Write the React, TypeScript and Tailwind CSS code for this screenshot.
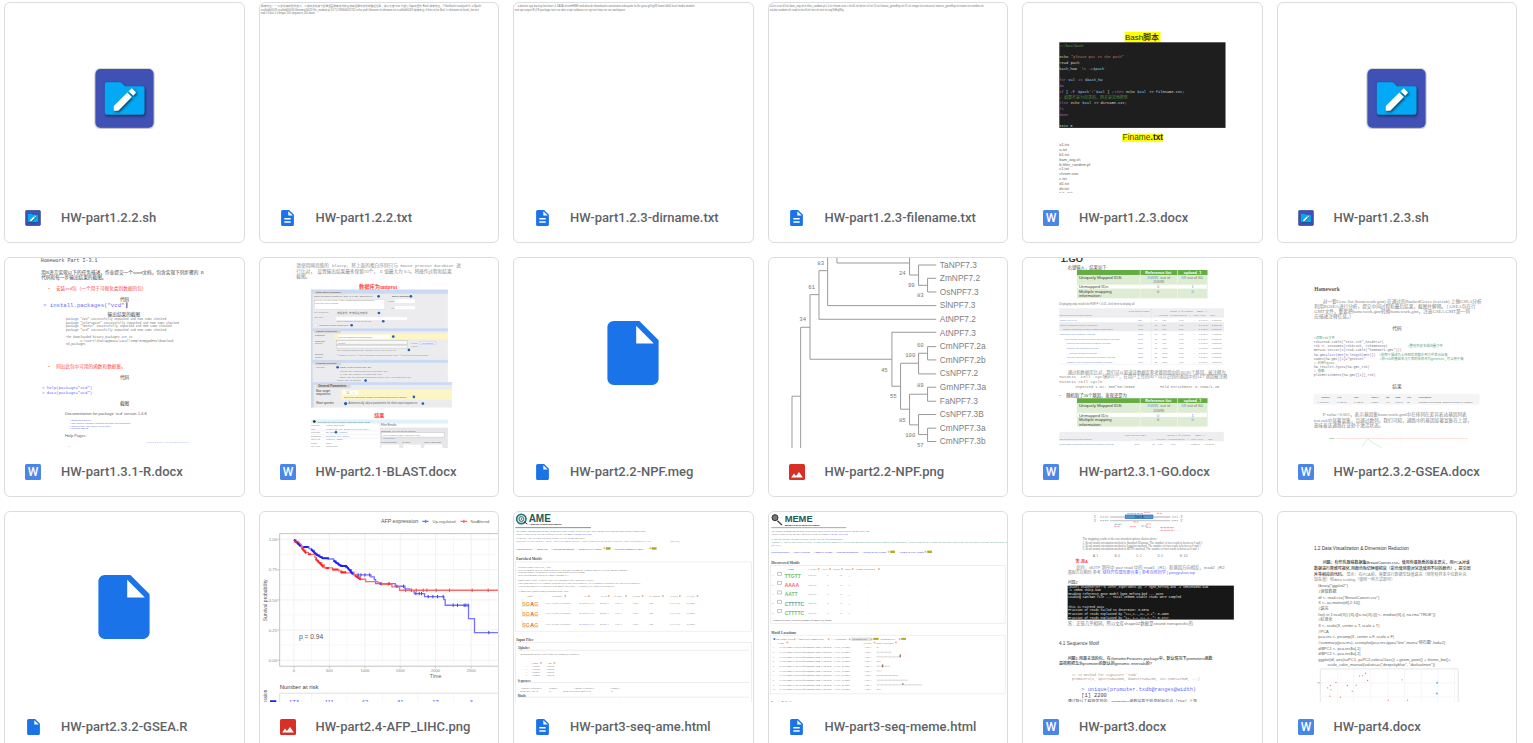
import type { ReactNode } from "react";

type Line = [x: number, y: number, size: number, text: string, fill?: string, font?: string, weight?: number];

const SANS = '"Liberation Sans", "Noto Sans CJK SC", sans-serif';
const SERIF = '"Liberation Serif", "Noto Sans CJK SC", serif';
const MONO = '"Liberation Mono", "Noto Sans CJK SC", monospace';
const GRAY = "#777777";
const BLUE = "#6b6bf5";
const LINK = "#6f8fd2";
const RED = "#ff4545";

function Lines({ rows, font = SANS, fill = GRAY }: { rows: Line[]; font?: string; fill?: string }) {
  return (
    <>
      {rows.map(([x, y, size, text, color, family, weight], i) => (
        <text key={i} x={x} y={y} fontSize={size} fill={color ?? fill} fontFamily={family ?? font} fontWeight={weight ?? 400} xmlSpace="preserve">
          {text}
        </text>
      ))}
    </>
  );
}

function Sheet({ top = 24, children }: { top?: number; children?: ReactNode }) {
  return (
    <svg viewBox={`15 ${top} 716 571`} className="block w-full" aria-hidden="true">
      {children}
    </svg>
  );
}

function Rects({ items }: { items: [number, number, number, number, string, string?][] }) {
  return (
    <>
      {items.map(([x, y, w, h, fill, stroke], i) => (
        <rect key={i} x={x} y={y} width={w} height={h} fill={fill} stroke={stroke} strokeWidth={2} />
      ))}
    </>
  );
}

/* ---------- icons ---------- */

function ScriptIcon({ className }: { className: string }) {
  return (
    <svg viewBox="0 0 181 184" className={className} aria-hidden="true">
      <rect x="3" y="3" width="175" height="177" rx="15" fill="#3f51b5" className="drop-shadow-[0px_1px_3px_rgba(0,0,0,0.6)]" />
      <path
        d="M31 49q0-6 6-6h38q5 0 8 3l9 9h52q7 0 7 7v72q0 7-7 7H37q-6 0-6-6z"
        fill="#03a9f4"
        className="drop-shadow-[2px_4px_4px_rgba(0,0,0,0.6)]"
      />
      <g transform="translate(47 51) scale(3.7)" className="drop-shadow-[1px_1px_1px_rgba(0,0,0,0.6)]">
        <path
          fill="#fff"
          d="M3 17.25V21h3.75L17.81 9.94l-3.75-3.75L3 17.25zM20.71 7.04c.39-.39.39-1.02 0-1.41l-2.34-2.34c-.39-.39-1.02-.39-1.41 0l-1.83 1.83 3.75 3.75 1.83-1.83z"
        />
      </g>
    </svg>
  );
}

function FileIcon({ className }: { className: string }) {
  return (
    <svg viewBox="4 2 16 20" className={className} aria-hidden="true">
      <path fill="#1a73e8" d="M14 2H6c-1.1 0-2 .9-2 2v16c0 1.1.9 2 2 2h12c1.1 0 2-.9 2-2V8l-6-6zm-1 7V3.5L18.5 9H13z" />
    </svg>
  );
}

function TextIcon() {
  return (
    <svg viewBox="4 2 16 20" className="h-4 w-[13px]" aria-hidden="true">
      <path
        fill="#1a73e8"
        d="M14 2H6c-1.1 0-2 .9-2 2v16c0 1.1.9 2 2 2h12c1.1 0 2-.9 2-2V8l-6-6zm2 16H8v-2h8v2zm0-4H8v-2h8v2zm-3-5V3.5L18.5 9H13z"
      />
    </svg>
  );
}

function WordIcon() {
  return (
    <svg viewBox="0 0 16 16" className="size-4" aria-hidden="true">
      <rect width="16" height="16" rx="1.5" fill="#4a86e8" />
      <text x="8" y="12.2" fontSize="12" textAnchor="middle" fill="#fff" fontFamily="Roboto, sans-serif" fontWeight="500">
        W
      </text>
    </svg>
  );
}

function ImageIcon() {
  return (
    <svg viewBox="0 0 16 16" className="size-4" aria-hidden="true">
      <rect width="16" height="16" rx="1.5" fill="#d93025" />
      <path d="M2.2 13.4 5 9.5l2 2.4 3-3.9 3.8 5.4z" fill="#fff" />
    </svg>
  );
}

/* ---------- previews ---------- */

function TxtSheet({ rows }: { rows: Line[] }) {
  return (
    <Sheet top={9}>
      <Lines rows={rows} fill="#777777" />
    </Sheet>
  );
}

function BashSheet() {
  const code: Line[] = [
    [124, 141, 11, "#!/bin/bash", "#5f9a4b"],
    [124, 175, 11, "echo", "#dcdcaa"],
    [159, 175, 11, '"please put in the path"', "#c8795c"],
    [124, 192, 11, "read", "#dcdcaa"],
    [158, 192, 11, "path", "#dddddd"],
    [124, 210, 11, "bash_hw=", "#cccccc"],
    [184, 210, 11, "`ls -a", "#c8795c"],
    [226, 210, 11, "$path`", "#8fd0f5"],
    [124, 244, 11, "for", "#b267ae"],
    [151, 244, 11, "val", "#8fd0f5"],
    [180, 244, 11, "in", "#b267ae"],
    [201, 244, 11, "$bash_hw", "#8fd0f5"],
    [124, 262, 11, "do", "#b267ae"],
    [124, 279, 11, "if", "#b267ae"],
    [144, 279, 11, "[ -f", "#dddddd"],
    [180, 279, 11, "$path", "#8fd0f5"],
    [214, 279, 11, "'/'", "#c8795c"],
    [234, 279, 11, "$val", "#8fd0f5"],
    [268, 279, 11, "] ;", "#dddddd"],
    [290, 279, 11, "then", "#b267ae"],
    [324, 279, 11, "echo", "#dcdcaa"],
    [358, 279, 11, "$val", "#8fd0f5"],
    [394, 279, 11, ">> filename.txt;", "#dddddd"],
    [124, 297, 12, "# 如果不是为目录的，则会是其他类型", "#4f8a3d"],
    [124, 313, 11, "else", "#b267ae"],
    [158, 313, 11, "echo", "#dcdcaa"],
    [193, 313, 11, "$val", "#8fd0f5"],
    [228, 313, 11, ">> dirname.txt;", "#dddddd"],
    [124, 330, 11, "fi", "#b267ae"],
    [124, 347, 11, "done", "#b267ae"],
    [124, 381, 11, "exit 0", "#dcdcaa"],
  ];
  const names = ["a1.txt", "a.txt", "b1.txt", "bam_wig.sh", "b.filter_random.pl", "c1.txt", "chrom.size", "c.txt", "d1.txt", "dir.txt", "Fi5_36bgs"];
  return (
    <Sheet top={9}>
      <Rects items={[[320, 96, 108, 31, "#ffff00"], [313, 401, 122, 25, "#ffff00"], [124, 127, 499, 257, "#1e1e1e"]]} />
      <Lines rows={[[321, 121, 24, "Bash脚本", "#222200", undefined, 500], [314, 421, 25, "Finame", "#444400"], [398, 421, 25, ".txt", "#222200", undefined, 600]]} />
      <Lines rows={code} font={MONO} />
      <Lines rows={names.map((n, i): Line => [124, 439 + i * 14.5, 12, n, "#666"])} />
    </Sheet>
  );
}

function RSheet() {
  return (
    <Sheet>
      <Lines
        font={SERIF}
        rows={[
          [122, 37, 15, "Homework Part I-3.1", "#555555", MONO],
          [124, 71, 14, "用R语言实现以下的任务描述，作业提交一个word文档，包含实现下列步骤的", "#444444"],
          [603, 71, 14, "R", "#444444"],
          [124, 88, 14, "代码和每一步输出结果的截图。", "#444444"],
          [145, 121, 14, "•", RED],
          [168, 121, 14, "安装vcd包（一个用于可视化类别数据的包）", RED],
          [360, 154, 14, "代码", "#444444"],
          [129, 171, 17, '> install.packages("vcd")', BLUE, MONO],
          [323, 199, 14, "输出结果的截图", "#444444"],
          [198, 210, 9, 'package "zoo" successfully unpacked and MD5 sums checked', GRAY, MONO],
          [198, 221, 9, 'package "colorspace" successfully unpacked and MD5 sums checked', GRAY, MONO],
          [198, 232, 9, 'package "lmtest" successfully unpacked and MD5 sums checked', GRAY, MONO],
          [198, 243, 9, 'package "vcd" successfully unpacked and MD5 sums checked', GRAY, MONO],
          [198, 265, 9, "The downloaded binary packages are in", GRAY, MONO],
          [241, 275, 9, "C:\\Users\\zhan\\AppData\\Local\\Temp\\RtmpQ9dF8V\\download", GRAY, MONO],
          [198, 286, 9, "ed_packages", GRAY, MONO],
          [145, 354, 14, "•", RED],
          [168, 354, 14, "列出此包中可用的函数和数据集。", RED],
          [360, 387, 14, "代码", "#444444"],
          [126, 416, 12, '> help(package="vcd")', BLUE, MONO],
          [126, 431, 12, '> data(package="vcd")', BLUE, MONO],
          [360, 466, 14, "截图", "#444444"],
          [195, 495, 12, "Documentation for package ‘vcd’ version 1.4-8", "#666666", SANS],
          [210, 514, 7, "• DESCRIPTION file.", BLUE, SANS],
          [210, 522, 7, "• User guides, package vignettes and other documentation.", BLUE, SANS],
          [210, 530, 7, "• Code demos. Use demo() to run them.", BLUE, SANS],
          [210, 538, 7, "• Package NEWS.", BLUE, SANS],
          [195, 560, 12, "Help Pages", "#666666", SANS],
          [438, 578, 7, "A B C D E F G H I K L M N O P R S T U V", "#9999ff", SANS],
          [206, 592, 10, "–"],
        ]}
      />
      <path d="M381 155V175" stroke="#222" strokeWidth="2" />
    </Sheet>
  );
}

function BlastSheet() {
  return (
    <Sheet>
      <Lines
        font={SERIF}
        fill="#8c8c8c"
        rows={[
          [124, 52, 14, "请使用网页版的"],
          [231, 52, 12, "blastp,", "#8c8c8c", MONO],
          [289, 52, 14, "将上面的蛋白序列只与"],
          [437, 52, 12, "mouse protein database", "#8c8c8c", MONO],
          [604, 52, 14, "进"],
          [124, 69, 14, "行比对，  设置输出结果最多保留10个，  E 值最大为 0.5。将操作过程和结果"],
          [124, 85, 14, "截图。"],
          [312, 118, 16, "数据库为uniprot", RED, SERIF, 700],
          [358, 502, 15, "结果", RED, SERIF, 700],
        ]}
      />
      <Rects
        items={[
          [168, 119, 411, 278, "#ececef"], [168, 119, 411, 12, "#cbdaf3"], [168, 119, 5, 278, "#cbdaf3"],
          [178, 123, 95, 10, "#d8d8dc"], [178, 148, 212, 30, "#fff", "#dddddd"], [421, 148, 59, 11, "#fff"], [421, 168, 59, 10, "#fff"],
          [244, 201, 212, 9, "#fff"], [168, 235, 411, 9, "#cbdaf3"], [178, 240, 80, 10, "#d8d8dc"], [238, 252, 341, 16, "#fdf6c4"], [250, 254, 155, 12, "#fff"],
          [244, 272, 213, 11, "#f8f8f8", "#c8c8c8"], [244, 286, 213, 9, "#f8f8f8", "#d0d0d0"], [493, 274, 50, 10, "#eef", "#c9d7f4"],
          [168, 330, 411, 9, "#cbdaf3"], [178, 336, 82, 10, "#d8d8dc"], [168, 397, 423, 76, "#ececef"], [168, 397, 423, 8, "#cbdaf3"],
          [168, 397, 8, 76, "#cbdaf3"], [184, 402, 103, 12, "#d8d8dc"], [258, 419, 333, 30, "#fdf6c4"], [264, 422, 46, 12, "#fff"],
          [168, 509, 411, 12, "#ddf3f9"], [376, 533, 203, 62, "#e7e7ea"], [379, 548, 189, 14, "#fff", "#ccc"], [379, 584, 54, 12, "#fff"], [445, 584, 53, 12, "#fff"], [508, 584, 54, 12, "#fff"],
          [178, 222, 8, 8, "#fff", "#ddd"],
        ]}
      />
      <Lines
        fill="#8a8a8a"
        rows={[
          [183, 130, 7, "Enter Query Sequence", "#666", SANS, 700],
          [178, 142, 7, "Enter accession number(s), gi(s), or FASTA sequence(s)", "#666"],
          [411, 142, 7, "Query subrange", "#666", SANS, 700], [401, 157, 7, "From"], [409, 176, 7, "To"],
          [179, 154, 6, "MKVLWAALLVTFLAGCQAKVEQAVETEPEPELRQQTEWQSGQRW"], [179, 161, 6, "LGRFWDYLRWVQTLSEQ"],
          [178, 190, 7, "Or, upload file"], [246, 191, 8, "选择文件  未选择任何文件", "#666"], [178, 205, 7, "Job Title"],
          [246, 217, 6, "Enter a descriptive title for your BLAST"], [190, 229, 7, "Align two or more sequences", "#666"],
          [183, 247, 7, "Choose Search Set", "#666", SANS, 700], [180, 258, 7, "Database", "#666"], [250, 263, 7, "UniProtKB/Swiss-Prot(swissprot)"],
          [180, 275, 7, "Organism", "#666"], [180, 283, 6, "Optional", "#3b8fb8"], [250, 281, 7, "mouse"], [468, 281, 6, "exclude"], [498, 281, 6, "Add organism", LINK], [468, 291, 6, "exclude"],
          [246, 303, 6, "Enter organism common name, binomial, or tax id. Only 20 top taxa"],
          [180, 316, 7, "Exclude", "#666"], [180, 324, 6, "Optional", "#3b8fb8"], [246, 317, 7, "□ Models (XM/XP)  □ Non-redundant RefSeq proteins (WP)  □ Uncultured/environmental"],
          [183, 343, 7, "Program Selection", "#666", SANS, 700], [180, 354, 7, "Algorithm"],
          [255, 355, 7, "blastp (protein-protein BLAST)", "#666"], [255, 365, 7, "PSI-BLAST (Position-Specific Iterated BLAST)"], [255, 374, 7, "PHI-BLAST (Pattern Hit Initiated BLAST)"], [255, 384, 7, "DELTA-BLAST (Domain Enhanced Lookup Time Accelerated BLAST)"], [246, 394, 6, "Choose a BLAST algorithm"],
          [190, 411, 9, "General Parameters", "#555", SANS, 700], [183, 426, 9, "Max target", "#444"], [183, 436, 9, "sequences", "#444"], [274, 431, 8, "10    ∨"],
          [267, 444, 7, "Select the maximum number of aligned sequences to display", "#666"], [183, 463, 9, "Short queries", "#444"], [281, 463, 8, "Automatically adjust parameters for short input sequences", "#666"],
          [186, 518, 6, "Your results are filtered to match records that include: mouse", "#4b7680"],
          [168, 528, 7, "Job Title"], [213, 528, 7, "Protein Sequence"], [168, 539, 7, "RID"], [213, 539, 7, "K9G8XWZA016  Search expires on 12-04", LINK],
          [168, 550, 7, "Program"], [213, 550, 7, "BLASTP       Citation", LINK], [168, 561, 7, "Database"], [213, 561, 7, "swissprot   See details", LINK],
          [168, 571, 7, "Query ID"], [213, 571, 7, "lcl|Query_33231"], [168, 582, 7, "Descr."], [213, 582, 7, "None"], [168, 592, 7, "Mol. type"], [213, 592, 7, "amino acid"],
          [378, 528, 8, "Filter Results", "#555"], [378, 545, 7, "Organism  only top 20 will appear", "#666"], [384, 558, 7, "Type common name, binomial, taxid"], [378, 568, 6, "+ Add organism", LINK], [378, 580, 7, "Percent Identity", "#666"], [443, 580, 7, "E value", "#666"], [508, 580, 7, "Query Coverage", "#666"],
        ]}
      />
      {[[371, 139], [468, 139], [372, 189], [385, 214], [290, 226], [415, 260], [462, 300], [248, 352], [332, 392], [477, 441], [272, 461], [504, 461], [243, 547], [178, 515]].map(([cx, cy], i) => (
        <circle key={i} cx={cx} cy={cy} r={i === 10 ? 5 : 4} fill={i === 13 ? "#222" : "#1f63b5"} />
      ))}
      <path d="M168 131H579M168 173V235M376 522V595M168 543H372M168 554H372M168 565H372" stroke="#dcdfe6" fill="none" />
    </Sheet>
  );
}

function TreeSheet() {
  const leaves = ["TaNPF7.3", "ZmNPF7.2", "OsNPF7.3", "SlNPF7.3", "AtNPF7.2", "AtNPF7.3", "CmNPF7.2a", "CmNPF7.2b", "CsNPF7.2", "GmNPF7.3a", "FaNPF7.3", "CsNPF7.3B", "CmNPF7.3a", "CmNPF7.3b"];
  return (
    <Sheet>
      <path
        d="M219 24V39H437M437 24V75H464M517 45H464V106H491M517 85H491V126H517M191 24V167H517M191 62H165V208H517M165 134H138V328H384M138 232H110V595M110 439H84V595M517 247H384V409H410M464 340H410V478H437M491 310H464V372H517M517 290H491V330H517M491 433H437V525H464M517 412H491V454H517M517 494H464V554H491M517 535H491V575H517"
        fill="none"
        stroke="#9a9a9a"
        strokeWidth="3"
      />
      <Lines rows={leaves.map((n, i): Line => [528, 53 + i * 40.8, 25, n, "#808080"])} />
      <Lines
        fill="#777"
        font={MONO}
        rows={[[160, 44, 17, "83"], [133, 116, 17, "61"], [106, 212, 17, "34"], [405, 75, 17, "24"], [432, 111, 17, "99"], [459, 142, 17, "83"], [459, 291, 17, "60"], [424, 321, 17, "100"], [351, 365, 17, "45"], [459, 412, 17, "89"], [378, 445, 17, "55"], [405, 516, 17, "85"], [424, 560, 17, "100"], [459, 590, 17, "57"]]}
      />
    </Sheet>
  );
}

function GreenTable({ y }: { y: number }) {
  return (
    <>
      <Rects items={[[177, y, 392, 15, "#64ad43"], [177, y + 15, 392, 28, "#ddecd2"], [177, y + 43, 392, 14, "#ffffff", "#ddecd2"], [177, y + 57, 392, 28, "#ddecd2"]]} />
      <path d={`M367 ${y}v85M479 ${y}v85`} stroke="#f4faf0" strokeWidth="2" />
      <Lines
        rows={[
          [382, y + 12, 12, "Reference list", "#fff", SANS, 700],
          [498, y + 12, 12, "upload_1", "#fff", SANS, 700],
          [183, y + 27, 13, "Uniquely Mapped IDS:", "#444"],
          [388, y + 27, 12, "20595", LINK],
          [427, y + 27, 12, "out of"],
          [406, y + 40, 12, "20595"],
          [491, y + 27, 12, "59", LINK],
          [508, y + 27, 12, "out of 60"],
          [183, y + 55, 13, "Unmapped IDs:", "#444"],
          [417, y + 55, 12, "0", LINK],
          [521, y + 55, 12, "1", LINK],
          [183, y + 69, 13, "Multiple mapping", "#444"],
          [183, y + 82, 13, "information:", "#444"],
          [417, y + 69, 12, "0"],
          [521, y + 69, 12, "0", LINK],
        ]}
      />
    </>
  );
}

function GoSheet() {
  const terms: [number, string][] = [[125, "muscle cell cycle"], [125, "protein-containing complex assembly"], [134, "*protein-containing complex subunit organization"], [125, "macromolecule metabolic process"], [139, "*nucleobase-containing compound metabolic process"], [145, "*nucleic acid compound metabolic process"], [145, "*heterocycle metabolic process"], [153, "*cellular metabolic process"], [145, "*cellular aromatic compound metabolic process"], [145, "*organic cyclic compound metabolic process"]];
  const nums = ["831", "1486", "1461", "2187", "2419", "2460", "2540", "7040", "2598", "2740"];
  return (
    <Sheet>
      <Lines rows={[[128, 37, 28, "1.GO", "#333", SANS, 700], [149, 56, 13, "右键输入，结果如下", "#555"]]} />
      <GreenTable y={60} />
      <Lines rows={[[124, 165, 8, "Displaying only results for FDR P < 0.05, click here to display all"]]} />
      <Rects items={[[124, 175, 494, 27, "#eeeef0"], [124, 217, 494, 27, "#ebebed"]]} />
      <Lines
        fill="#8a8a8a"
        rows={[
          [330, 185, 7, "Homo sapiens (REF)", LINK],
          [456, 185, 7, "upload_1 (▼Hierarchy"],
          [538, 185, 7, "NEW! ⓘ)", RED],
          [124, 199, 7, "GO biological process complete", LINK],
          [368, 199, 7, "#"],
          [410, 199, 7, "#    expected   Fold Enrichment   +/-   raw P value       FDR", LINK],
          ...terms.map(([x, t], i): Line => [x, 213 + i * 14, 7, t, LINK]),
          ...nums.map((n, i): Line => [360, 213 + i * 14, 7, n, LINK]),
          ...nums.map((_, i): Line => [410, 213 + i * 14, 7, `${14 + i}`, LINK]),
          ...nums.map((_, i): Line => [432, 213 + i * 14, 7, `${i + 4}.29`]),
          ...nums.map((_, i): Line => [483, 213 + i * 14, 7, `${i % 4}.78`]),
          ...nums.map((_, i): Line => [527, 213 + i * 14, 7, "+"]),
          ...nums.map((_, i): Line => [543, 213 + i * 14, 7, `${(i % 9) + 1}.74E-04`]),
          ...nums.map((_, i): Line => [582, 213 + i * 14, 7, `${(i % 9) + 1}.86E-02`]),
        ]}
      />
      <path d="M124 202H618M124 343H618M400 175V343" stroke="#dedee2" />
      <Lines
        font={SERIF}
        fill="#888"
        rows={[
          [149, 371, 13, "通过和数据库比对，我们可以知道该数据库参考基因组中的20595个基因，被注释为"],
          [124, 385, 12, "Mitotic  cell  cycle", "#888", MONO],
          [258, 385, 13, "的831个，在用户上传的60个可以识别的基因中的14个基因被注释"],
          [124, 399, 12, "Mitotic cell cycle", "#888", MONO],
          [173, 413, 11, "expected 1.02: 500*50/20595", "#888", MONO],
          [426, 413, 11, "Fold Enrichment 6.78=9/1.45", "#888", MONO],
          [123, 441, 13, "•"],
          [145, 442, 13, "随机取了30个基因，发现还是为", "#444"],
        ]}
      />
      <GreenTable y={445} />
      <Rects items={[[124, 546, 494, 28, "#eeeef0"]]} />
      <Lines
        fill="#8a8a8a"
        rows={[
          [320, 557, 7, "Homo sapiens (REF)", LINK],
          [448, 557, 7, "upload_1 (▼Hierarchy"],
          [533, 557, 7, "NEW! ⓘ)", RED],
          [124, 571, 7, "GO biological process complete", LINK],
          [356, 571, 7, "#"],
          [403, 571, 7, "#    expected   Fold Enrichment   +/-   raw P value       FDR", LINK],
          [124, 585, 7, "nucleobase-containing compound metabolic process", LINK],
          [350, 585, 7, "2419", LINK],
          [403, 585, 7, "15    4.02              3.01               +      1.21E-06       1.79E-02"],
        ]}
      />
    </Sheet>
  );
}

function GseaSheet() {
  return (
    <Sheet>
      <Lines
        font={SERIF}
        fill="#858585"
        rows={[
          [124, 124, 16, "Homework", "#555", SERIF, 700],
          [149, 159, 14, "对一套Gene list (homework.gmt) 在通过的RankedGenes (test.rnk) 上做GSEA分析"],
          [124, 174, 14, "利用RGSEA进行分析，提交中间过程和最后结果，截图并解释。（ GSEA包在行"],
          [124, 190, 14, "GMT文件，重要把homework.gmt转换homework.gmt，注意GSEA GMT第一列"],
          [124, 205, 14, "应描述注释信息。）"],
          [358, 239, 14, "代码", "#555"],
        ]}
      />
      <Lines
        font={MONO}
        fill="#777"
        rows={[
          [122, 267, 10, "#读取rnk文件", "#5da37c"],
          [122, 279, 10, 'rnk=read.table("test.rnk",header=T)'],
          [122, 292, 10, "rnk <- setNames(rnk$rank, rnk$GeneID)"],
          [404, 292, 10, "#整理并定名成向量文件", "#5da37c"],
          [122, 304, 10, 'GMT=as.vector(t(read.table("homework.gmt")))'],
          [122, 317, 10, "hw.gmt=list(GMT[3:length(GMT)])", "#7373b8"],
          [318, 317, 10, "#前两个描述为上传到后面算去到文件表示出来", "#5da37c"],
          [122, 329, 10, 'names(hw.gmt)[1]="geneset"'],
          [320, 329, 10, "#将rnk的基因名与文库的名称改为geneset,可以用于做", "#5da37c"],
          [122, 341, 10, "# 利用fgsea", "#5da37c"],
          [122, 354, 10, "hw_result<-fgsea(hw.gmt,rnk)"],
          [122, 366, 10, "# 画图", "#5da37c"],
          [122, 379, 10, "plotEnrichment(hw.gmt[[1]],rnk)"],
        ]}
      />
      <Lines
        rows={[
          [358, 414, 14, "结果", "#555"],
          [149, 499, 14, "P-value<0.001，表示基因集homework.gmt中在排列在差异表达基因列表", "#858585", SERIF],
          [122, 515, 14, "test.rnk中显著富集，且通过数列，我们可知，通路中的基因显著富集在上部，", "#858585", SERIF],
          [122, 532, 14, "意味着该通路在该处于激活状态。", "#858585", SERIF],
        ]}
      />
      <Rects items={[[122, 432, 498, 32, "#f4f5f7"]]} />
      <Lines
        rows={[
          [145, 445, 7, "pathway", "#444"], [193, 445, 7, "pval", "#444"], [243, 445, 7, "padj", "#444"], [294, 445, 7, "log2err", "#444"], [340, 445, 7, "ES", "#444"], [368, 445, 7, "NES", "#444"], [403, 445, 7, "size", "#444"], [437, 445, 7, "leadingEdge", "#444"],
          [134, 460, 7, "1  geneset"], [193, 460, 7, "1.45E-10"], [243, 460, 7, "1.45E-10"], [294, 460, 7, "0.8267"], [340, 460, 7, "0.6"], [368, 460, 7, "2.8745"], [403, 460, 7, "52"], [437, 460, 7, "c(ENSG00000117632, ENSG00000131747, ENSG0"],
        ]}
      />
      <path d="M168 566H185" stroke="#8bc0a0" strokeWidth="2" />
      <path d="M190 566H583" stroke="#ffb3b3" strokeDasharray="3 2" strokeWidth="2" />
      <path d="M267 591L284 567 302 580 326 593" fill="none" stroke="#baf2ba" strokeWidth="2" />
      <path d="M384 551V592" stroke="#eeeeee" />
    </Sheet>
  );
}

function SurvivalSheet() {
  const xs = [117, 223, 330, 436, 542, 649];
  return (
    <Sheet top={22}>
      <path d="M74 104H731M74 195H731M74 286H731M74 376H731M74 467H731M117 87V485M223 87V485M330 87V485M436 87V485M542 87V485M649 87V485" stroke="#eaeaea" strokeWidth="2" />
      <path d="M74 150H731M74 241H731M74 331H731M74 421H731M170 87V485M276 87V485M383 87V485M489 87V485M596 87V485M702 87V485M170 566V594M276 566V594M383 566V594M489 566V594M596 566V594" stroke="#f3f3f3" strokeWidth="2" />
      <path d="M731 87H74V485H731M67 104H74M67 195H74M67 286H74M67 376H74M67 467H74M117 485V491M223 485V491M330 485V491M436 485V491M542 485V491M649 485V491" fill="none" stroke="#c4c4c4" strokeWidth="3" />
      <path d="M74 594V566H731" fill="none" stroke="#d0d0d0" strokeWidth="2" />
      <path d="M117 105H122V110H129V118H136V124H141V127H162V132H170V137H178V146H186V151H194V156H202V161H220V163H236V169H243V175H251V181H260V185H272V189H280V195H289V203H296V211H348V217H358V225H362V237H421V245H450V253H465V258H478V267H509V276H567V285H571V302H641V342H659V384H731" fill="none" stroke="#7474ff" strokeWidth="4" />
      <path d="M117 105H121V113H133V119H139V128H146V137H152V143H160V149H180V158H184V168H190V174H200V181H208V190H233V195H252V199H260V205H297V211H308V217H316V224H332V231H369V235H376V239H411V247H434V257H731" fill="none" stroke="#ff6969" strokeWidth="4" />
      <path d="M117 105l20 20M145 127h16M168 134l18 17 18 10h18M236 168l22 16h16l12 15 8 10" fill="none" stroke="#2020f5" strokeWidth="6" />
      <path d="M118 108l7 6M140 130l14 16M160 149h8M182 162l24 26M212 190h10M232 195h18M256 203h18M300 213l18 12" fill="none" stroke="#f52a2a" strokeWidth="6" />
      <path d="M310 206v10M318 206v10M330 206v10M344 206v10M376 233v8M403 233v8M426 240v10M446 240v10M483 262v10M493 262v10M500 262v10M520 271v10M534 271v10M548 271v10M565 271v10M595 297v10M608 297v10M628 297v10M633 297v10M640 297v10M702 379v10" stroke="#3d3df5" strokeWidth="3" />
      <path d="M380 233v10M400 233v10M452 252v10M470 252v10M484 252v10M505 252v10M516 252v10M544 252v10M584 252v10M652 252v10M700 252v10" stroke="#f54545" strokeWidth="3" />
      <Lines
        rows={[
          [378, 56, 16, "AFP expression", "#555"], [533, 55, 12, "Up-regulated", "#666"], [647, 55, 12, "NotAltered", "#666"],
          [41, 109, 13, "1.00", "#888"], [41, 200, 13, "0.75", "#888"], [41, 291, 13, "0.50", "#888"], [41, 381, 13, "0.25", "#888"], [41, 472, 13, "0.00", "#888"],
          [525, 521, 16, "Time", "#666"], [132, 402, 20, "p = 0.94", "#555"], [74, 554, 18, "Number at risk", "#444"],
        ]}
      />
      {["0", "500", "1000", "1500", "2000", "2500"].map((t, i) => (
        <text key={t} x={xs[i]} y="502" fontSize="12" textAnchor="middle" fill="#888" fontFamily={SANS}>{t}</text>
      ))}
      {["173", "111", "42", "31", "17", "3"].map((t, i) => (
        <text key={t} x={xs[i]} y="597" fontSize="18" textAnchor="middle" fill="#5555ff" fontFamily={SANS}>{t}</text>
      ))}
      <text transform="translate(36 350) rotate(-90)" fontSize="15" fill="#555" fontFamily={SANS}>Survival probability</text>
      <text transform="translate(36 654) rotate(-90)" fontSize="14" fill="#555" fontFamily={SANS}>AFP expression</text>
      <path d="M502 50H521M512 45v10" stroke="#7474ff" strokeWidth="4" />
      <path d="M617 50H637M627 45v10" stroke="#ff6969" strokeWidth="4" />
      <path d="M45 590H64" stroke="#2020ff" strokeWidth="6" />
    </Sheet>
  );
}

function AmeSheet() {
  const rows = [295, 325, 358];
  return (
    <Sheet top={22}>
      <circle cx="37" cy="43" r="14" fill="none" stroke="#2b7375" strokeWidth="5" />
      <circle cx="37" cy="43" r="7" fill="none" stroke="#4d9495" strokeWidth="4" />
      <circle cx="37" cy="43" r="2" fill="#222" />
      <path d="M45 51L55 58" stroke="#333" strokeWidth="3" />
      <path d="M19 69H246" stroke="#6b9b9c" strokeWidth="3" />
      <Rects items={[[20, 172, 708, 208, "none", "#e8e8e8"], [20, 414, 708, 200, "none", "#e8e8e8"], [291, 128, 14, 7, "#a5a916"], [428, 128, 15, 7, "#a5a916"]]} />
      <path d="M25 437H722M25 534H722M25 578H722" stroke="#e3e3e3" strokeWidth="2" />
      <Lines
        font={SERIF}
        rows={[
          [59, 52, 30, "AME", "#1d5a5d", SANS, 700],
          [61, 61, 7, "Analysis of Motif Enrichment", "#222", SANS, 700],
          [20, 82, 8, "For further information on how to interpret these results please access"],
          [248, 82, 8, "http://meme-suite.org/doc/ame-output-format.html", BLUE],
          [20, 91, 8, "To get a copy of the MEME software please access"],
          [179, 91, 8, "http://meme-suite.org", BLUE],
          [20, 103, 8, "If you use AME in your research, please cite the following paper:"],
          [20, 112, 7, 'Robert McLeay and Timothy L. Bailey, "Motif Enrichment Analysis: A unified framework and method evaluation", BMC Bioinformatics, 11:165', "#6aa080"],
          [485, 112, 7, "[full text]", BLUE],
          [22, 136, 7, "Enriched Motifs", BLUE, SERIF, 700],
          [77, 136, 7, "|   Input Files", BLUE, SERIF, 700],
          [126, 136, 7, "|  Program information", BLUE, SERIF, 700],
          [204, 136, 7, "|  Results in TSV Format", BLUE, SERIF, 700],
          [313, 136, 7, "|  Partition sequences by motif", BLUE, SERIF, 700],
          [22, 167, 11, "Enriched Motifs", "#555", SERIF, 700],
          [26, 190, 8, "Sequence motif pair: seq_AME"],
          [26, 198, 8, "Selected motifs used in 1000 sequences at optimal cutting the Primary positive p-value against controls"],
          [26, 206, 8, "Sequence model frequencies: 0.274 0.226 0.226 0.274 at 0.000"],
          [26, 214, 8, "Total pseudocount added to a motif column: 0.1"],
          [26, 230, 8, "Significance Score: Fisher's exact test (optimized over median p-value)"],
          [26, 238, 8, "Labelling positives: all Primary sequences are labelled as positive, all Secondary sequences are labelled as negative"],
          [26, 246, 8, "Classifying positives: sequences with motif total score > 10 (total) are classified as positive"],
          [26, 262, 8, "At most total (Bonferroni) reporting cutoff 10.0"],
          [54, 277, 8, "Logo"], [130, 277, 8, "Database"], [226, 277, 8, "ID"], [273, 277, 8, "Alt ID"], [316, 277, 8, "p-value"], [369, 277, 8, "E-value"], [419, 277, 8, "TP Thresh"], [483, 277, 8, "TP (%)"], [534, 277, 8, "FP (%)"],
          ...rows.flatMap((y): Line[] => [
            [108, y + 2, 7, "JASPAR_2018_vertebrates"], [210, y + 2, 7, "MA0095.2_HW", BLUE], [273, y + 2, 7, "MEME-1"], [318, y + 2, 7, "1.69e-1"], [369, y + 2, 7, "3.38e0"], [420, y + 2, 7, "9.45"], [482, y + 2, 7, "13 (17.1%)"], [534, y + 2, 7, "5 (2.4%)"],
            [40, y + 8, 16, "SG", "#f5a23c", SANS, 700], [64, y + 8, 16, "A", "#de5048", SANS, 700], [76, y + 8, 16, "G", "#f5a23c", SANS, 700],
          ]),
          [22, 410, 11, "Input Files", "#555", SERIF, 700], [26, 433, 9, "Alphabet", "#555", SERIF, 700], [34, 450, 8, "Background source: built from the (primary) sequences"],
          [69, 478, 8, "Name"], [118, 478, 8, "Bg."], [50, 487, 7, "A", RED], [69, 487, 7, "Adenine"], [113, 487, 7, "0.27094"], [50, 496, 7, "C", BLUE], [69, 496, 7, "Cytosine"], [113, 496, 7, "0.22906"], [50, 505, 7, "G", "#f5a23c"], [69, 505, 7, "Guanine"], [113, 505, 7, "0.22906"], [50, 514, 7, "T", "#479a47"], [69, 514, 7, "Thymine"], [113, 514, 7, "0.27094"],
          [26, 533, 9, "Sequences", "#555", SERIF, 700],
          [36, 554, 8, "Primary Sequences"], [119, 554, 8, "Number"], [195, 554, 8, "Control Sequences"], [305, 554, 8, "Number"],
          [34, 563, 7, "meme/seq-AME.fa"], [119, 563, 7, "76"], [163, 563, 7, "meme/seq-control-shuffled.fa"], [305, 563, 7, "76"],
          [26, 577, 9, "Motifs", "#555", SERIF, 700], [60, 594, 8, "Database"], [208, 594, 8, "Source"], [318, 594, 8, "Motif Count"],
        ]}
      />
      {[[169, 274], [240, 274], [299, 274], [351, 274], [401, 274], [462, 274], [513, 274], [566, 274], [286, 131], [424, 131], [96, 475], [136, 475]].map(([cx, cy], i) => (
        <circle key={i} cx={cx} cy={cy} r="3" fill="#f4b183" />
      ))}
      {rows.map((y) => <path key={y} d={`M40 ${y - 11}V${y + 10}H90`} fill="none" stroke="#bbb" strokeWidth="1" />)}
    </Sheet>
  );
}

function MemeSheet() {
  const logos: [string, string][] = [["TTGTT", "#6cbf6c"], ["AAAA", "#ee6a6a"], ["AATT", "#79c079"], ["CTTTTC", "#6aa5a0"], ["CTTTTC", "#6cbf6c"]];
  return (
    <Sheet top={22}>
      <circle cx="33" cy="39" r="9" fill="#777" stroke="#333" strokeWidth="3" />
      <path d="M40 48L54 61" stroke="#444" strokeWidth="4" />
      <path d="M22 69H247" stroke="#6d8586" strokeWidth="2" />
      <Rects items={[[20, 182, 704, 174, "none", "#e6e6e6"], [20, 392, 704, 176, "none", "#e6e6e6"], [262, 399, 60, 10, "#dedede"], [379, 138, 14, 7, "#aaae1c"], [490, 138, 14, 7, "#aaae1c"], [328, 400, 16, 6, "#aaae1c"], [412, 400, 14, 6, "#aaae1c"]]} />
      <Lines
        font={SERIF}
        rows={[
          [62, 52, 28, "MEME", "#1d5a5d", SANS, 700],
          [62, 64, 7, "Multiple Em for Motif Elicitation", "#222", SANS, 700],
          [22, 83, 8, "For further information on how to interpret these results please access"],
          [247, 83, 8, "http://meme-suite.org", BLUE],
          [22, 92, 8, "To get a copy of the MEME software please access"],
          [183, 92, 8, "http://meme-suite.org", BLUE],
          [22, 106, 8, "If you use MEME in your research, please cite the following paper:"],
          [22, 115, 8, 'Timothy L. Bailey and Charles Elkan, "Fitting a mixture model by expectation maximization to discover motifs in biopolymers", Proceedings of the Second International Conference on Intelligent Systems for Molecular Biology', "#6aa080"],
          [22, 123, 7, "[full text]", BLUE],
          [22, 146, 7, "Discovered Motifs", BLUE, SERIF, 700], [85, 146, 7, "|  Motif Locations", BLUE, SERIF, 700], [148, 146, 7, "|  Inputs & Settings", BLUE, SERIF, 700], [213, 146, 7, "|  Program information", BLUE, SERIF, 700], [294, 146, 7, "|  Results in Text Format", BLUE, SERIF, 700], [404, 146, 7, "|  Results in XML Format", BLUE, SERIF, 700],
          [22, 177, 11, "Discovered Motifs", "#555", SERIF, 700],
          [72, 196, 8, "Logo", "#444"], [133, 196, 8, "E-value"], [175, 196, 8, "Sites"], [207, 196, 8, "Width"], [243, 196, 8, "More"], [275, 196, 8, "Submit/Download"],
          ...logos.flatMap(([t, c], i): Line[] => [
            [25, 215 + i * 28, 7, `${i + 1}.`], [62, 219 + i * 28, 15, t, c, SANS, 700], [133, 215 + i * 28, 7, "6.4e-003"], [190, 215 + i * 28, 7, "6"], [227, 215 + i * 28, 7, "15"], [254, 217 + i * 28, 8, "↓", BLUE], [309, 217 + i * 28, 8, "→", BLUE],
          ]),
          [27, 348, 8, "Stopped because requested number of motifs (5) found.", "#444"],
          [22, 387, 11, "Motif Locations", "#555", SERIF, 700],
          [34, 407, 8, "Only Motif Sites", "#555"], [99, 407, 7, "○ Motif Sites+Scanned Sites", "#555"], [202, 407, 7, "○ All Sequences", "#555"], [266, 407, 7, "Download PDF", "#555"], [350, 407, 7, "Download SVG", "#555"],
          [42, 417, 8, "Name"], [299, 417, 8, "p-value"], [337, 417, 8, "Motif Locations"],
          ...Array.from({ length: 10 }).flatMap((_, i): Line[] => [
            [26, 431 + i * 14, 7, `${i + 1}.`], [45, 431 + i * 14, 8, "TCONS00031762 scaffold00029:1024-1180 gene=XLOC_018266"], [301, 431 + i * 14, 7, "1.04e-7"], [334, 429 + i * 14, 7, "+"],
          ]),
          [22, 597, 10, "Inputs & Settings", "#555", SERIF, 700],
        ]}
      />
      {[0, 1, 2, 3, 4].map((i) => <rect key={i} x="41" y={203 + i * 28} width="11" height="9" fill="#fff" stroke="#aaa" strokeWidth="2" />)}
      {[345, 383, 409, 350, 379, 352, 403, 432, 475, 350].map((x, i) => <path key={i} d={`M339 ${429 + i * 14}H${x}`} stroke="#aaa" strokeWidth="2" strokeDasharray="3 1" />)}
      {[[164, 193], [198, 193], [234, 193], [266, 193], [345, 193], [374, 141], [485, 141], [92, 404], [194, 404], [257, 404], [323, 404], [407, 404], [70, 414], [332, 414], [396, 414]].map(([cx, cy], i) => (
        <circle key={i} cx={cx} cy={cy} r="3" fill="#f4b183" />
      ))}
      <circle cx="31" cy="403" r="3" fill="#2979ff" />
      <path d="M409 450v8M356 480v8M417 536v5" stroke="#9a6a4a" strokeWidth="4" />
    </Sheet>
  );
}

function Part3Sheet() {
  return (
    <Sheet top={22}>
      <path d="M277 37H457" stroke="#888" strokeWidth="2" />
      <path d="M277 48H457" stroke="#ccc" strokeWidth="4" />
      <path d="M247 37H272M462 37H480M247 48H272M462 48H480" stroke="#888" strokeWidth="2" strokeDasharray="5 2" />
      <Rects items={[[322, 31, 83, 11, "#4f96e0", "#2b6cb5"], [149, 243, 499, 102, "#171717"]]} />
      <path d="M327 27h48M290 59h22M370 64h20M427 69h42" stroke="#5299d8" strokeWidth="2" strokeDasharray="8 2" />
      <path d="M378 23h18M416 26h16M288 65h17M336 66h20M346 52h15M384 58h15M384 68h15M428 77h42" stroke="#ff6b6b" strokeWidth="2" strokeDasharray="8 2" />
      <Lines
        rows={[
          [228, 39, 9, "5'"], [488, 39, 9, "3'"], [228, 51, 9, "3'"], [488, 51, 9, "5'"], [350, 40, 8, "Gene A", "#173d68"],
          [194, 107, 9, "The mapping results of the two stranded options shown above:", GRAY, SERIF],
          [194, 117, 9, "1. Read strand orientation method is Standard Illumina. The number of two reads is between 0 and 1", GRAY, SERIF],
          [194, 126, 9, "2. Read strand orientation method is Ligation method. The number of two reads is between 0 and 1", GRAY, SERIF],
          [194, 136, 9, "3. Read strand orientation method is dUTPs method. The number of two reads is between 0 and 1", GRAY, SERIF],
          [225, 156, 9, "A. 1"], [290, 156, 9, "B. 0"], [355, 156, 9, "C. 1"], [419, 156, 9, "D. 0"], [486, 156, 9, "E. 1/2"],
          [173, 175, 12, "答:选A", RED, SANS, 700],
          [175, 192, 13, "此时，dUTP 测序中 pair read 中的 read1（R1）和基因方向相反，read2（R2", "#888"],
          [149, 208, 12, "基因方向相同 参考", "#888"], [254, 208, 12, "链特异性建库那点事 | 参考自陈同学 | yangyuhao.top", "#6a6aff"],
          [149, 238, 12, "问题2", "#555"],
          [149, 360, 13, "答：正链几乎相同，所以文库shape02数据是strand nonspecific的", "#777"],
          [123, 421, 14, "4.1 Sequence Motif", "#444"],
          [149, 465, 12, "问题1:用最主流的包，在GenomicFeatures package中，默认情况下promoters函数", "#333", SANS, 500],
          [123, 482, 12, "是按照把怎么promoter的默认的genomic intervals的?", "#333", SANS, 500],
          [162, 513, 10, "## S4 method for signature 'TxDb'", "#999", MONO],
          [162, 527, 10, "promoters(x, upstream=2000, downstream=200, use.names=TRUE, ...)", "#999", MONO],
          [190, 558, 16, "> unique(promoter.txdb@ranges@width)", BLUE, MONO],
          [190, 578, 16, "[1] 2200", "#444", MONO],
          [149, 596, 12, "通过默认工程师发现的，promoters函数是基于转录起始位点（TSS）上游", "#555"],
        ]}
      />
      <Lines
        font={MONO}
        fill="#e0e0e0"
        rows={[
          [151, 251, 9, "(base) zhan@server:~$ infer_experiment.py -r hg38_RefSeq.bed -i SRR1039508.bam"],
          [151, 260, 9, "-s 20000 sharp.bam"],
          [151, 270, 9, "Reading reference gene model hg38_RefSeq.bed ... Done"],
          [151, 280, 9, "Loading SAM/BAM file ... Total 200000 usable reads were sampled"],
          [151, 310, 9, "This is PairEnd Data"],
          [151, 320, 9, "Fraction of reads failed to determine: 0.0379"],
          [151, 331, 9, 'Fraction of reads explained by "1++,1--,2+-,2-+": 0.4903'],
          [151, 342, 9, 'Fraction of reads explained by "1+-,1-+,2++,2--": 0.4717'],
        ]}
      />
    </Sheet>
  );
}

function Part4Sheet() {
  const dots = [[189, 534], [172, 543], [164, 550], [174, 556], [171, 575], [202, 578], [223, 543], [250, 542], [238, 560], [260, 514], [269, 514], [278, 506], [284, 528], [388, 526], [346, 587], [404, 587], [219, 594]];
  return (
    <Sheet top={22}>
      <Lines
        rows={[
          [123, 136, 14, "1.2 Data Visualization & Dimension Reduction", "#333", SANS, 500],
          [149, 179, 12, "问题：有些乳腺癌数据集BreastCancer.csv，使用你最熟悉的版本语言，用PCA对该", "#333", SANS, 500],
          [123, 196, 12, "数据进行降维可视化,用颜色标记肿瘤和良（彩色使用能对常选使用不同的颜色），提交图", "#333", SANS, 500],
          [123, 213, 12, "片等相应的代码。", "#333", SANS, 500],
          [221, 213, 12, "显示：在PCA前，需要进行数据空缺值填充（用所有样本中位数补充", "#888"],
          [123, 230, 12, "缺失值）和data scaling（使用一种方式即可）", "#888"],
          ...[
            'library("ggplot2")', "#读取数据", 'df <- read.csv("BreastCancer.csv")', "X <- as.matrix(df[,2:10])", "#填充",
            'for(i in 1:ncol(X)) {X[,i][is.na(X[,i])] <- median(X[,i], na.rm="TRUE")}', "#标准化", "X <- scale(X, center = T, scale = T)", "#PCA",
            "pca.res <- prcomp(X, center = F, scale = F)", '#summary(pca.res), screeplot(pca.res,type="line",main="碎石图",lwd=2)', "df$PC1 <- pca.res$x[,1]", "df$PC2 <- pca.res$x[,2]",
            "ggplot(df, aes(x=PC1, y=PC2,color=Class)) + geom_point() + theme_bw()+",
          ].map((t, i): Line => [136, 248 + i * 17, 12, t, "#666"]),
          [164, 485, 12, 'scale_color_manual(values=c("deepskyblue", "darksalmon"))', "#666"],
        ]}
      />
      <path d="M142 594V493H556V594" fill="none" stroke="#d9d9d9" strokeWidth="2" />
      <path d="M142 535H556M142 577H556M193 493V594M242 493V594M293 493V594M345 493V594M395 493V594M445 493V594M495 493V594M545 493V594" stroke="#f2f2f2" strokeWidth="2" />
      <path d="M133 535H142" stroke="#999" strokeWidth="2" />
      {dots.map(([cx, cy], i) => <circle key={i} cx={cx} cy={cy} r="2" fill="#ef7d67" />)}
      <circle cx="493" cy="535" r="3" fill="#5abdf0" />
      <circle cx="492" cy="567" r="3" fill="#5abdf0" />
    </Sheet>
  );
}

const TXT_A: Line[] = [
  [18, 21, 8, "脚本作业：一.以文件夹的形式传入，二传出文件夹下目录里面所有文件的名称和目录中文件的路径位置，并以长度 size 为第七列输出显示 Bash 脚本作业，#!/bin/bash read path ls -a $path"],
  [17, 32, 8, "scaffold00029 scaffold00030 filename00029 file_random.pl 10 TCONS00031762 echo path filename.txt dirname.txt scaffold00029 脚本作业 if then echo $val >> dirname.txt bash_hw exit"],
  [17, 42, 8, "end if 0 bar 0 if begin 100 sequence 200 done"],
];
const TXT_B: Line[] = [
  [26, 21, 8, "a-docker app backup bin boot c1 DATA chromHMM cmd data dir download e-annotation eukaryote fa file gsea gtf hg38 home lib64 local media module"],
  [17, 32, 8, "mnt opt output R-4 R-package root run sbin script software srv sys test tmp usr var workspace"],
];
const TXT_C: Line[] = [
  [17, 21, 8, "a1.txt a.txt b1.txt bam_wig.sh b.filter_random.pl c1.txt chrom.size c.txt d1.txt dir.txt e1.txt f1.txt human_geneExp.txt if1.txt image.txt insitiue.txt mouse_geneExp.txt name.txt number.sh"],
  [17, 32, 8, "out.bw random.sh read.txt test3.sh test.sh test.txt wigToBigWig"],
];

type Kind = "script" | "text" | "word" | "image" | "file";
type Item = { name: string; kind: Kind; preview?: ReactNode };

const FILES: Item[] = [
  { name: "HW-part1.2.2.sh", kind: "script" },
  { name: "HW-part1.2.2.txt", kind: "text", preview: <TxtSheet rows={TXT_A} /> },
  { name: "HW-part1.2.3-dirname.txt", kind: "text", preview: <TxtSheet rows={TXT_B} /> },
  { name: "HW-part1.2.3-filename.txt", kind: "text", preview: <TxtSheet rows={TXT_C} /> },
  { name: "HW-part1.2.3.docx", kind: "word", preview: <BashSheet /> },
  { name: "HW-part1.2.3.sh", kind: "script" },
  { name: "HW-part1.3.1-R.docx", kind: "word", preview: <RSheet /> },
  { name: "HW-part2.1-BLAST.docx", kind: "word", preview: <BlastSheet /> },
  { name: "HW-part2.2-NPF.meg", kind: "file" },
  { name: "HW-part2.2-NPF.png", kind: "image", preview: <TreeSheet /> },
  { name: "HW-part2.3.1-GO.docx", kind: "word", preview: <GoSheet /> },
  { name: "HW-part2.3.2-GSEA.docx", kind: "word", preview: <GseaSheet /> },
  { name: "HW-part2.3.2-GSEA.R", kind: "file" },
  { name: "HW-part2.4-AFP_LIHC.png", kind: "image", preview: <SurvivalSheet /> },
  { name: "HW-part3-seq-ame.html", kind: "text", preview: <AmeSheet /> },
  { name: "HW-part3-seq-meme.html", kind: "text", preview: <MemeSheet /> },
  { name: "HW-part3.docx", kind: "word", preview: <Part3Sheet /> },
  { name: "HW-part4.docx", kind: "word", preview: <Part4Sheet /> },
];

function KindIcon({ kind }: { kind: Kind }) {
  if (kind === "script") return <ScriptIcon className="size-4" />;
  if (kind === "text") return <TextIcon />;
  if (kind === "word") return <WordIcon />;
  if (kind === "image") return <ImageIcon />;
  return <FileIcon className="h-4 w-[13px]" />;
}

function Card({ name, kind, preview }: Item) {
  return (
    <a href="#" className="flex aspect-square flex-col overflow-hidden rounded-md border border-[#dadce0] bg-white">
      <div className="flex min-h-0 flex-1 items-center justify-center overflow-hidden">
        {preview ?? (kind === "script" ? <ScriptIcon className="size-[61px]" /> : <FileIcon className="h-16 w-[52px]" />)}
      </div>
      <div className="flex h-12 shrink-0 items-center gap-5 pl-5 pr-3">
        <span className="flex w-4 shrink-0 justify-center">
          <KindIcon kind={kind} />
        </span>
        <span className="truncate text-[13px] leading-5 font-medium text-[#5f6368]">{name}</span>
      </div>
    </a>
  );
}

export default function App() {
  return (
    <main className="h-screen overflow-hidden bg-white pt-0.5 pr-4 pl-1 font-[Roboto,sans-serif]">
      <ul className="grid grid-cols-6 gap-3.5">
        {FILES.map((file) => (
          <li key={file.name}>
            <Card {...file} />
          </li>
        ))}
      </ul>
    </main>
  );
}
